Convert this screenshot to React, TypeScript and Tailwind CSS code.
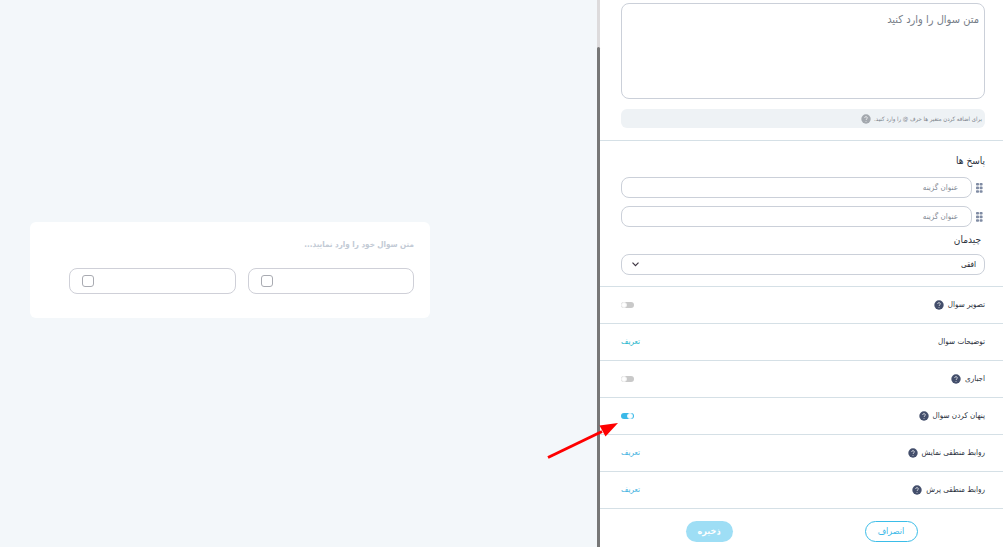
import { ReactNode } from "react";

const Help = ({ muted = false }: { muted?: boolean }): JSX.Element => (
  <svg
    viewBox="0 0 20 20"
    className={muted ? "size-[10px] shrink-0 text-[#a3a8ae]" : "size-[10px] shrink-0 text-[#434e6b]"}
  >
    <circle cx="10" cy="10" r="9.4" fill="currentColor" />
    <path
      d="M7.2 7.8 C7.2 4.4 12.8 4.4 12.8 7.8 C12.8 9.8 10 9.8 10 12 M10 14 V15.6"
      stroke="white"
      strokeOpacity="0.8"
      strokeWidth="1.7"
      fill="none"
    />
  </svg>
);

const Grip = (): JSX.Element => (
  <svg viewBox="0 0 7 10" className="w-[7px] h-[10px] shrink-0" fill="#7f8ba3">
    <rect x="0" y="0" width="3" height="2.6" rx="0.8" />
    <rect x="3.6" y="0" width="3" height="2.6" rx="0.8" />
    <rect x="0" y="3.6" width="3" height="2.6" rx="0.8" />
    <rect x="3.6" y="3.6" width="3" height="2.6" rx="0.8" />
    <rect x="0" y="7.2" width="3" height="2.6" rx="0.8" />
    <rect x="3.6" y="7.2" width="3" height="2.6" rx="0.8" />
  </svg>
);

const Toggle = ({ id, on = false }: { id: string; on?: boolean }): JSX.Element => (
  <input
    id={id}
    type="checkbox"
    role="switch"
    defaultChecked={on}
    dir="ltr"
    className="block appearance-none w-[13px] h-[6px] rounded-full bg-[#c9c9c9] checked:bg-[#3bb9e8] before:block before:size-[6px] before:rounded-full before:bg-white before:border before:border-[#f2f2f2] checked:before:ml-[6px] checked:before:border-[#e6f7fd]"
  />
);

const Arrow = (): JSX.Element => (
  <svg viewBox="0 0 74 40" className="absolute z-10 right-[14px] top-[8px] w-[74px] h-[40px] pointer-events-none">
    <path d="M2 36.5 L56 10.5" stroke="#fe0000" strokeWidth="3" fill="none" />
    <path d="M72 2 L53.5 4.5 L59.5 15.5 Z" fill="#fe0000" />
  </svg>
);

const Answer = ({ id }: { id: string }): JSX.Element => (
  <div className="flex items-center gap-1">
    <button type="button" aria-label="جابجایی" className="w-[9px] flex justify-end">
      <Grip />
    </button>
    <input
      id={id}
      aria-label="عنوان گزینه"
      placeholder="عنوان گزینه"
      className="flex-1 min-w-0 h-[21px] px-[13px] text-[8px] border border-[#cbd0d9] rounded-lg placeholder:text-[#858c97]"
    />
  </div>
);

const Row = ({ label, children }: { label: ReactNode; children: ReactNode }): JSX.Element => (
  <div className="flex items-center justify-between h-[37px] pr-[18px] pl-[21px] border-t border-[#d5e0e6] text-[8px] text-[#2b313d]">
    <div className="flex items-center gap-1">{label}</div>
    {children}
  </div>
);

const Preview = (): JSX.Element => (
  <main className="flex-1 flex flex-col items-end justify-center bg-[#f3f7fa] pl-[30px] pb-[7px]">
    <div className="w-[400px] max-w-full h-24 bg-white rounded-md pr-4 pl-[39px] pt-4">
      <p className="text-[8px] leading-[14px] font-bold text-[#c2cad5]">
        متن سوال خود را وارد نمایید...
      </p>
      <div className="flex gap-3 mt-4">
        {["option-1", "option-2"].map((id) => (
          <label
            key={id}
            className="flex-1 flex items-center justify-end h-[26px] pl-3 border border-[#cfd0d8] rounded-lg"
          >
            <input
              id={id}
              type="checkbox"
              aria-label="گزینه"
              className="appearance-none size-3 border border-[#a9abb2] rounded-[3px]"
            />
          </label>
        ))}
      </div>
    </div>
  </main>
);

const Settings = (): JSX.Element => (
  <aside className="w-[403px] shrink-0 bg-white">
    <div className="pt-[3px] pr-[18px] pl-[21px] pb-3">
      <textarea
        aria-label="متن سوال"
        placeholder="متن سوال را وارد کنید"
        className="block w-full h-24 px-[5px] py-2 text-[11px] leading-4 border border-[#cbd0d9] rounded-lg resize-none placeholder:text-[#767d87]"
      />
      <div className="flex items-center gap-[3px] h-[19px] mt-[10px] px-[3px] rounded-md bg-[#eef2f5] text-[6px] text-[#7d848c]">
        <span>برای اضافه کردن متغیر ها حرف @ را وارد کنید.</span>
        <Help muted />
      </div>
    </div>

    <div className="border-t border-[#d5e0e6] pr-[18px] pl-[21px] pt-3 pb-[11px]">
      <h2 className="text-[10px] leading-4 text-[#2b313d]">پاسخ ها</h2>
      <div className="flex flex-col gap-2 mt-2">
        <Answer id="answer-1" />
        <Answer id="answer-2" />
      </div>
      <label htmlFor="layout" className="block mt-[5px] mb-[6px] pr-1 text-[10px] leading-4 text-[#2b313d]">
        چیدمان
      </label>
      <div className="relative">
        <select
          id="layout"
          defaultValue="افقی"
          className="block w-full h-[21px] px-2 appearance-none border border-[#cbd0d9] rounded-lg text-[8px] text-[#16191f]"
        >
          <option>افقی</option>
          <option>عمودی</option>
        </select>
        <svg viewBox="0 0 7 5" className="absolute left-[11px] top-2 w-[7px] h-[5px] pointer-events-none">
          <path d="M0.5 0.7 L3.5 3.7 L6.5 0.7" stroke="#3e3542" strokeWidth="1.2" fill="none" />
        </svg>
      </div>
    </div>

    <Row label={<><label htmlFor="image">تصویر سوال</label><Help /></>}>
      <Toggle id="image" />
    </Row>
    <Row label={<span>توضیحات سوال</span>}>
      <a href="#description" className="text-[#1cb5cc]">تعریف</a>
    </Row>
    <Row label={<><label htmlFor="required">اجباری</label><Help /></>}>
      <Toggle id="required" />
    </Row>
    <Row label={<><label htmlFor="hidden">پنهان کردن سوال</label><Help /></>}>
      <div className="relative">
        <Toggle id="hidden" on />
        <Arrow />
      </div>
    </Row>
    <Row label={<><span>روابط منطقی نمایش</span><Help /></>}>
      <a href="#show-logic" className="text-[#3bb0e0]">تعریف</a>
    </Row>
    <Row label={<><span>روابط منطقی پرش</span><Help /></>}>
      <a href="#jump-logic" className="text-[#3bb0e0]">تعریف</a>
    </Row>

    <div className="flex justify-center gap-[132px] border-t border-[#d5e0e6] pt-3 pb-[5px] text-[9px]">
      <button type="button" className="h-[21px] w-[53px] rounded-full border border-[#3bbde8] text-[#3bb9e8]">
        انصراف
      </button>
      <button type="button" className="h-[21px] w-[47px] rounded-full bg-[#9edef5] text-white font-bold">
        ذخیره
      </button>
    </div>
  </aside>
);

const App = (): JSX.Element => {
  return (
    <div dir="rtl" className="flex min-h-screen font-['DejaVu_Sans_Condensed','DejaVu_Sans',sans-serif]">
      <Settings />
      <div className="w-[3px] bg-[#dddbdc] pt-[47px] flex flex-col">
        <div className="flex-1 rounded-t-sm bg-[#777777]" />
      </div>
      <Preview />
    </div>
  );
};

export default App;
